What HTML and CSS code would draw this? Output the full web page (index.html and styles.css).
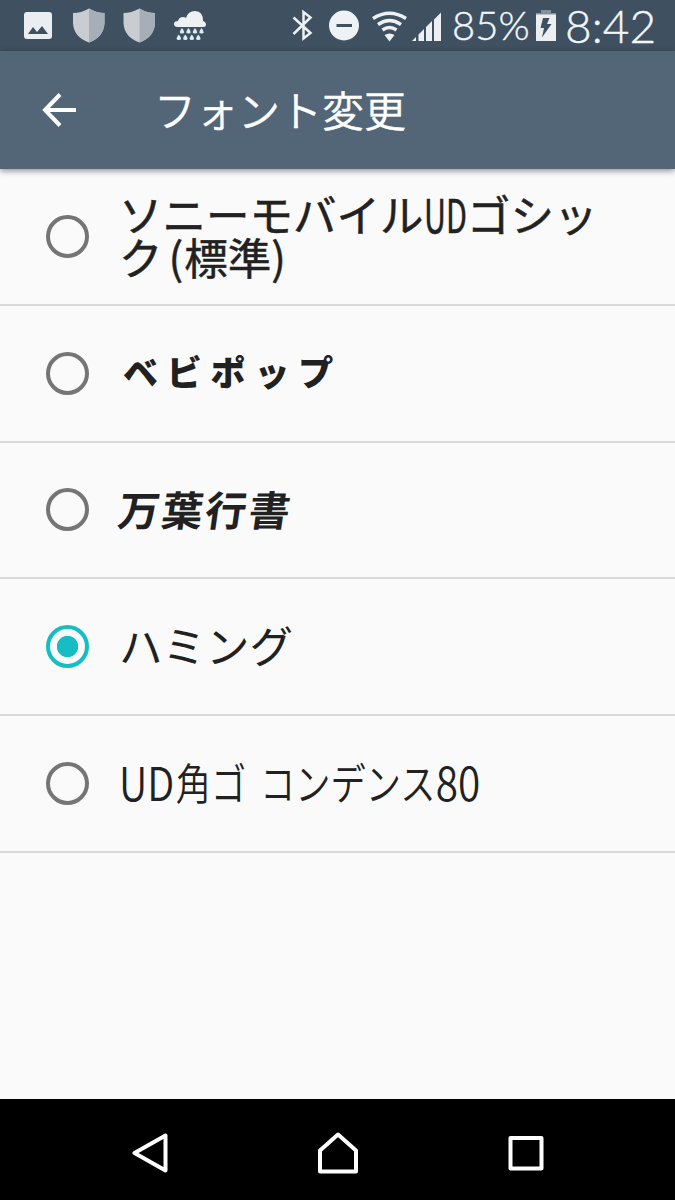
FILE: index.html
```html
<!DOCTYPE html>
<html lang="ja">
<head>
<meta charset="utf-8">
<title>フォント変更</title>
<link rel="stylesheet" href="styles.css">
</head>
<body>
<div class="screen">
  <div class="status">
    <svg class="notices" width="225" height="51" viewBox="0 0 225 51">
      <rect x="24" y="12" width="28" height="27" rx="3" fill="#ebeef1"/>
      <path d="M28 34l5-7 4 5 5-6 6 8z" fill="#3f5060"/>
      <path d="M89 8.500Q97 13 104.500 13V23Q104 37 89 42.500Q73.500 37 73 23V13Q81 13 89 8.500Z" fill="#c9cdd1"/>
      <path d="M89 8.500Q97 13 104.500 13V23Q104 37 89 42.500Z" fill="#a6afb7"/>
      <path d="M139.500 8.500Q147 13 155 13V23Q154.500 37 139.500 42.500Q124 37 123.500 23V13Q131 13 139.500 8.500Z" fill="#c9cdd1"/>
      <path d="M139.500 8.500Q147 13 155 13V23Q154.500 37 139.500 42.500Z" fill="#a6afb7"/>
      <path d="M178 27q-4 0-4-3 0-3 4-3 1-4 5-4 2 0 3 1 2-7 9-7 8 0 8 10 3 1 3 3.500 0 2.500-3 2.500z" fill="#edf1f3"/>
      <g fill="#dcecf6">
        <path id="drop" d="M182 28q-4.500 5.500 0 5.500t0-5.500z"/>
        <use href="#drop" x="6.500"/><use href="#drop" x="13"/><use href="#drop" x="19.500"/>
        <use href="#drop" x="-3.200" y="6.600"/><use href="#drop" x="3.300" y="6.600"/><use href="#drop" x="9.800" y="6.600"/><use href="#drop" x="16.300" y="6.600"/>
      </g>
    </svg>
    <svg class="signals" width="170" height="51" viewBox="280 0 170 51">
      <path d="M293.500 17.500L310.500 33l-7 5.500V12l7 5.500L293.500 34" fill="none" stroke="#edf1f4" stroke-width="2.500"/>
      <circle cx="344" cy="25.500" r="15" fill="#eff2f4"/>
      <path d="M336.500 25.500h15.500" stroke="#3f5060" stroke-width="3"/>
      <g fill="none" stroke="#edf1f4" stroke-width="3.400">
        <path d="M373 18.500q16.500-10.500 33 0"/>
        <path d="M378 24.500q11.500-8 23 0"/>
        <path d="M382.500 30q7-5 14 0"/>
      </g>
      <path d="M384.500 35q5-3 10 0l-5 6.500z" fill="#edf1f4"/>
      <path d="M412 41l4-4v4zM418.500 41v-6.500l5.500-5.500v12zM426 41v-14l6-6v20zM434 41v-21.500l7-7v28.500z" fill="#edf1f4"/>
    </svg>
    <span class="percent">85%</span>
    <svg class="battery" width="20" height="51" viewBox="536 0 20 51">
      <path d="M541 10h10v3h5v2h-20v-2h5z" fill="#85909a"/>
      <path d="M536 14.500h20V41h-20z" fill="#eceff1"/>
      <path d="M543 18h6.500l-2.500 6h4.500L542 37.500l2-9.500h-3.500z" fill="#3f5060"/>
    </svg>
    <span class="clock">8:42</span>
  </div>
  <header class="bar">
    <svg width="36" height="36" viewBox="0 0 36 36" fill="none" stroke="#fff" stroke-width="4"><path d="M34 18H4M18 2.500L3 18 18 33.500"/></svg>
    <h1 class="title">フォント変更</h1>
  </header>
  <main class="list">
    <div class="row"><span class="radio"></span><span class="label gothic"><span class="line">ソニーモバイル<span class="half">UD</span>ゴシッ</span><span class="line">ク<span class="paren open">(</span>標準<span class="paren">)</span></span></span></div>
    <div class="row"><span class="radio"></span><span class="label pop">ベビポップ</span></div>
    <div class="row"><span class="radio"></span><span class="label brush">万葉行書</span></div>
    <div class="row"><span class="radio checked"></span><span class="label humming">ハミング</span></div>
    <div class="row"><span class="radio"></span><span class="label condensed"><span class="caps">UD</span>角ゴ<span class="gap"> </span>コンデンス<span class="digits">80</span></span></div>
  </main>
  <nav class="nav">
    <svg width="36" height="42" viewBox="0 0 36 42"><path d="M33.500 3.500v35L2.500 21z"/></svg>
    <svg width="42" height="42" viewBox="0 0 42 42"><path d="M21 2.500L39 18.500V39.500H3V18.500z"/></svg>
    <svg width="36" height="42" viewBox="0 0 36 42"><path d="M2.500 6h31v30.500h-31z"/></svg>
  </nav>
</div>
</body>
</html>
```

FILE: styles.css
```css
body { margin: 0; }
.screen {
  width: 675px;
  height: 1200px;
  display: flex;
  flex-direction: column;
  overflow: hidden;
  background: #fafafa;
  color: #212121;
  font-family: "Noto Sans CJK JP", sans-serif;
}
.status {
  height: 51px;
  flex: none;
  display: flex;
  align-items: center;
  background: #3f5060;
  color: #f0f6fb;
  font-family: Lato, sans-serif;
  font-weight: 300;
  white-space: nowrap;
  -webkit-text-stroke: .4px #f0f6fb;
}
.status svg { flex: none; }
.signals { margin-left: 55px; }
.percent { width: 86px; flex: none; font-size: 40px; line-height: 51px; text-indent: 2px; }
.clock { font-size: 46px; line-height: 56px; margin-left: 9px; }
.bar {
  height: 118px;
  flex: none;
  display: flex;
  align-items: center;
  gap: 76px;
  padding-left: 42px;
  background: #526678;
  color: #fff;
  box-shadow: 0 2px 6px rgba(0, 0, 0, .42);
  z-index: 1;
}
.title { margin: 0 0 3px; font-size: 42px; line-height: 62px; font-weight: 350; -webkit-text-stroke: .4px #fff; }
.list { flex: 1; }
.row {
  box-sizing: border-box;
  height: 136.800px;
  display: flex;
  align-items: center;
  padding-left: 46px;
  border-bottom: 2px solid #d9d9d9;
}
.radio {
  box-sizing: border-box;
  width: 43px;
  height: 43px;
  flex: none;
  margin-right: 30px;
  border: 4.500px solid #757575;
  border-radius: 50%;
}
.checked {
  border-color: #17bdc4;
  background: radial-gradient(circle, #17bdc4 10.300px, transparent 11px);
}
.label { font-size: 43.500px; line-height: 64px; margin-bottom: 4px; white-space: nowrap; }
.gothic { display: flex; flex-direction: column; -webkit-text-stroke: .5px #212121; margin-bottom: 2px; }
.line { line-height: 43.500px; }
.half {
  display: inline-block;
  width: 43.500px;
  transform: scale(.7, 1.080);
  transform-origin: 0 60%;
  line-height: 40px;
}
.paren { display: inline-block; width: 21.750px; line-height: 40px; }
.open { text-indent: 6px; }
.pop { font-size: 35px; letter-spacing: 8.800px; font-weight: 900; padding-left: 4px; }
.brush { font-size: 41px; letter-spacing: 2.500px; font-weight: 700; transform: skewX(-8deg); }
.condensed { transform: scaleX(.81); transform-origin: 0 50%; font-weight: 350; }
.caps, .digits { display: inline-block; transform-origin: 0 60%; line-height: 56px; }
.caps { width: 70px; transform: scale(1.120, 1.080); }
.digits { width: 60px; transform: scale(1.150, 1.080); }
.gap { display: inline-block; width: 17px; }
.nav {
  height: 101px;
  flex: none;
  display: flex;
  justify-content: center;
  align-items: center;
  gap: 149px;
  padding-top: 6px;
  box-sizing: border-box;
  background: #000;
}
.nav path { fill: none; stroke: #fff; stroke-width: 4; stroke-linejoin: round; }
```
